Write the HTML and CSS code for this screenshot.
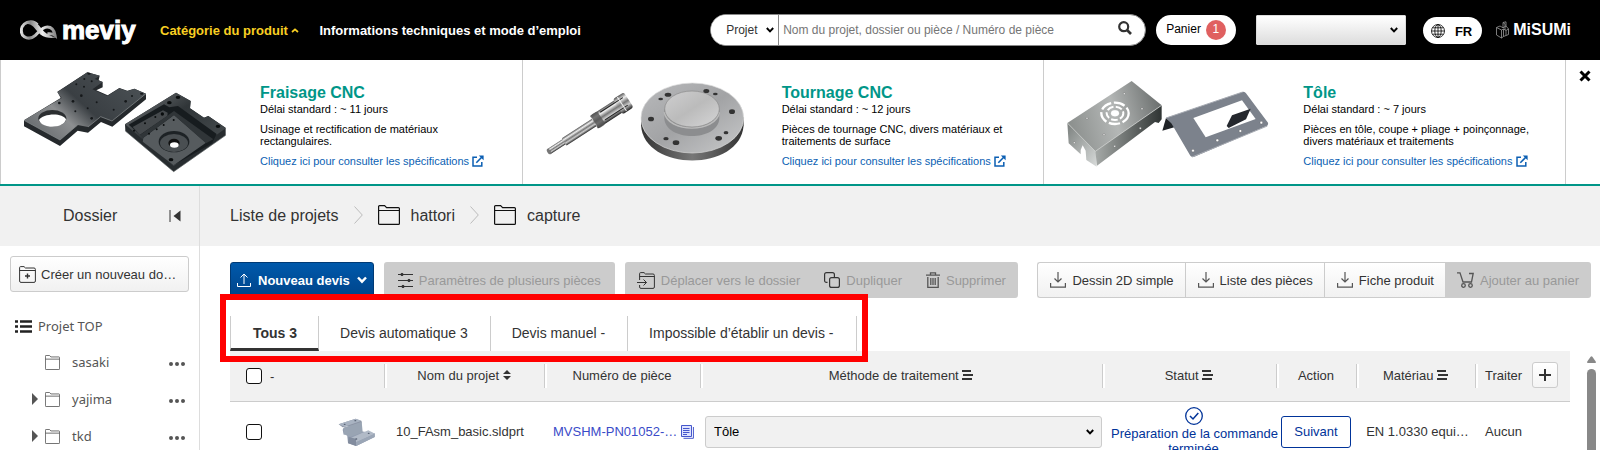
FILE: index.html
```html
<!DOCTYPE html>
<html lang="fr">
<head>
  <meta charset="UTF-8" />
  <meta name="viewport" content="width=device-width, initial-scale=1" />
  <title>meviy - Liste de projets</title>
  <link rel="stylesheet" href="styles.css">
</head>
<body>
  <!-- Icônes partagées -->
  <svg class="sprite" aria-hidden="true">
    <symbol id="i-folder" viewBox="0 0 22 20">
      <path d="M.6 18.4V1.6Q.6.6 1.6.6H6.6L8.6 2.6H20.4Q21.4 2.6 21.4 3.6V18.4Q21.4 19.4 20.4 19.4H1.6Q.6 19.4.6 18.4ZM.6 5.5H21.4" fill="none" stroke="currentColor" stroke-width="1.2"/>
    </symbol>
    <symbol id="i-download" viewBox="0 0 16 16">
      <path d="M8 0V10M4.5 6.5 8 10 11.5 6.5M.6 11V15.2H15.4V11" fill="none" stroke="currentColor" stroke-width="1.2"/>
    </symbol>
    <symbol id="i-external" viewBox="0 0 12 12">
      <path d="M5 2.2H1V11H9.8V7" fill="none" stroke="currentColor" stroke-width="1.5"/>
      <path d="M4.3 7.7 10 2" stroke="currentColor" stroke-width="1.6"/>
      <path d="M6.8.4H11.6V5.2Z" fill="currentColor"/>
    </symbol>
    <symbol id="i-filter" viewBox="0 0 11 10">
      <path d="M0 1H9M1 5H11M0 9H10" stroke="currentColor" stroke-width="2"/>
    </symbol>
    <symbol id="i-next" viewBox="0 0 9 18">
      <path d="M.5.5 8.3 9 .5 17.5" fill="none" stroke="currentColor"/>
    </symbol>
    <symbol id="i-dots" viewBox="0 0 16 4">
      <path d="M2 2H2.01M8 2H8.01M14 2H14.01" stroke="currentColor" stroke-width="4" stroke-linecap="round"/>
    </symbol>
    <symbol id="i-caret" viewBox="0 0 6 12">
      <path d="M0 0 6 6 0 12Z" fill="currentColor"/>
    </symbol>
    <symbol id="i-down" viewBox="0 0 8 6">
      <path d="M.8 1 4 4.4 7.2 1" fill="none" stroke="currentColor" stroke-width="1.9"/>
    </symbol>
  </svg>

  <header class="topbar">
    <a class="logo" href="#">
      <svg width="38" height="20" viewBox="0 0 114 60">
        <defs>
          <linearGradient id="loop" x1="0" x2="1"><stop offset="0" stop-color="#ddd"/><stop offset=".25" stop-color="#888"/><stop offset=".6" stop-color="#eee"/><stop offset="1" stop-color="#8a8a8a"/></linearGradient>
        </defs>
        <path d="M52 14C42 3 24 2 13 12C1 23 1 42 13 50C24 57 37 54 46 46C58 35 66 21 82 21C96 21 103 33 105 46C98 40 91 42 82 41" fill="none" stroke="url(#loop)" stroke-width="9"/>
        <path d="M5 22C12 2 38-4 53 12C66 26 75 46 109 52C96 56 76 54 62 44C50 35 41 14 24 12C15 12 10 15 5 22Z" fill="url(#loop)"/>
      </svg>
      <span>meviy</span>
    </a>
    <nav class="topnav">
      <a class="current" href="#">Catégorie du produit
        <svg width="8" height="5" viewBox="0 0 8 5"><path d="M1 4 4 1.3 7 4" fill="none" stroke="currentColor" stroke-width="1.7"/></svg></a>
      <a href="#">Informations techniques et mode d’emploi</a>
    </nav>

    <form class="search">
      <div class="pick">
        <select aria-label="Type de recherche"><option>Projet</option></select>
        <svg width="8" height="6"><use href="#i-down"/></svg>
      </div>
      <input type="text" aria-label="Recherche" placeholder="Nom du projet, dossier ou pièce / Numéro de pièce" />
      <button type="button" aria-label="Rechercher">
        <svg width="14" height="14" viewBox="0 0 14 14"><circle cx="5.7" cy="5.7" r="4.5" fill="none" stroke="currentColor" stroke-width="2.2"/><path d="M9 9 13 13" stroke="currentColor" stroke-width="2.6"/></svg>
      </button>
    </form>
    <button class="cart">Panier <span class="badge">1</span></button>
    <div class="pick account">
      <select aria-label="Compte"><option></option></select>
      <svg width="8" height="6"><use href="#i-down"/></svg>
    </div>
    <button class="lang">
      <svg width="14" height="14" viewBox="0 0 14 14" fill="none" stroke="currentColor" stroke-width=".8"><circle cx="7" cy="7" r="6.5"/><ellipse cx="7" cy="7" rx="3.2" ry="6.4"/><path d="M7 .6V13.4M.6 7H13.4M1.5 3.8H12.5M1.5 10.2H12.5"/></svg>
      FR
    </button>
    <a class="misumi" href="#">
      <svg width="13" height="18" viewBox="0 0 13 18" fill="none" stroke="#999" stroke-width=".8"><path d="M.5 6.5 5.5 9V17L.5 14ZM.5 6.5 4 5 7 6.8V1.5L10 .8V5M5.5 9 7.5 8V15.5L5.5 17M7.5 8 10 9.5 12.5 8V13.5L7.5 15.5M10 5 12.5 8M7 6.8 10 5M7 1.5 9 3V9M10 9.5V14.5"/></svg>
      <span>MiSUMi</span>
    </a>
  </header>

  <section class="products">
    <article class="product">
      <svg width="238" height="120" viewBox="3 0 714 360">
        <defs>
          <linearGradient id="plate" x1="0" y1=".8" x2="1" y2=".2"><stop offset="0" stop-color="#666a6d"/><stop offset=".3" stop-color="#8d8f91"/><stop offset=".5" stop-color="#3a3f43"/><stop offset="1" stop-color="#4b5155"/></linearGradient>
          <linearGradient id="block" x1="0" y1="0" x2="1" y2="1"><stop offset="0" stop-color="#777b7e"/><stop offset=".4" stop-color="#303538"/><stop offset="1" stop-color="#4d5356"/></linearGradient>
        </defs>
        <path d="M72 181 182 114 172 95 262 37 299 47 296 61 308 66V82L289 91 323 106 358 84 382 92 403 86 438 101V118L337 200 303 186 264 218 233 212 180 258 72 199Z" fill="#25292c"/>
        <path d="M72 181 185 114 172 97 262 37 299 47 284 57 308 66 277 88 322 108 358 85 382 94 403 86 438 101 336 183 302 170 264 201 233 195 180 240Z" fill="url(#plate)"/>
        <path d="M72 181 180 240 233 195M264 201 302 170 336 183 438 101" fill="none" stroke="#8d9192" stroke-width="2"/>
        <ellipse cx="157" cy="175" rx="42" ry="25" fill="#2b2e30"/>
        <path d="M117 180C127 160 188 156 198 178C192 207 125 208 117 180Z" fill="#fff"/>
        <g fill="#15181a"><ellipse cx="267" cy="41" rx="5" ry="3"/><ellipse cx="425" cy="101" rx="5" ry="3"/><circle cx="178" cy="129" r="4"/><circle cx="219" cy="124" r="4"/><circle cx="244" cy="107" r="4"/><circle cx="226" cy="154" r="3"/><circle cx="263" cy="145" r="3"/><circle cx="290" cy="127" r="3"/><circle cx="275" cy="175" r="4"/><circle cx="341" cy="149" r="3"/><circle cx="377" cy="124" r="4"/><circle cx="396" cy="108" r="3"/><circle cx="229" cy="73" r="3"/><circle cx="252" cy="80" r="3"/><circle cx="253" cy="57" r="3"/><circle cx="275" cy="64" r="3"/></g>
        <path d="M375 193 528 98 572 123 570 145 612 173 625 168 677 203V226L521 335 376 213Z" fill="#272c2f"/>
        <path d="M375 193 528 98 572 123 570 145 612 173 625 168 677 205 521 318Z" fill="url(#block)"/>
        <path d="M386 194 492 133 508 142 534 138 650 222 636 250 521 316 428 245 430 232Z" fill="#171c1f"/>
        <path d="M398 201 489 151 503 158 502 168 420 224Z" fill="#45494c"/>
        <path d="M428 245 430 233 522 165 618 248 521 316Z" fill="#565b5e"/>
        <path d="M522 153 640 238 618 250 522 165 430 233 420 225Z" fill="#303538"/>
        <ellipse cx="522" cy="245" rx="46" ry="32" fill="#1d2225"/>
        <ellipse cx="522" cy="249" rx="42" ry="27" fill="#4a4f52"/>
        <ellipse cx="522" cy="249" rx="17" ry="13" fill="#111"/>
        <ellipse cx="523" cy="255" rx="13" ry="8" fill="#fff"/>
        <g fill="#090c0d"><ellipse cx="534" cy="112" rx="7" ry="5"/><ellipse cx="508" cy="128" rx="7" ry="5"/><ellipse cx="654" cy="199" rx="7" ry="5"/><ellipse cx="513" cy="299" rx="7" ry="5"/><circle cx="487" cy="162" r="5"/><circle cx="466" cy="171" r="3"/><circle cx="435" cy="190" r="3"/><circle cx="402" cy="212" r="3"/><circle cx="447" cy="221" r="3"/><circle cx="470" cy="208" r="3"/><circle cx="491" cy="195" r="3"/><circle cx="521" cy="180" r="3"/></g>
        <path d="M376 213 521 335 677 226" fill="none" stroke="#5f6567" stroke-width="2"/>
      </svg>
      <div class="product-text">
        <h2>Fraisage CNC</h2>
        <p>Délai standard : ~ 11 jours</p>
        <p class="desc">Usinage et rectification de matériaux<br>rectangulaires.</p>
        <a href="#">Cliquez ici pour consulter les spécifications <svg width="12" height="12"><use href="#i-external"/></svg></a>
      </div>
    </article>

    <article class="product">
      <svg width="238" height="120" viewBox="-21 0 714 360">
        <defs>
          <linearGradient id="shaft" x1="0" y1="0" x2="0" y2="1"><stop offset="0" stop-color="#555"/><stop offset=".25" stop-color="#eee"/><stop offset=".5" stop-color="#777"/><stop offset=".7" stop-color="#ccc"/><stop offset="1" stop-color="#222"/></linearGradient>
          <linearGradient id="disc" x1="0" y1="0" x2="1" y2="1"><stop offset="0" stop-color="#b9babc"/><stop offset=".5" stop-color="#a2a3a5"/><stop offset="1" stop-color="#c9cacb"/></linearGradient>
          <linearGradient id="rim"><stop offset="0" stop-color="#333"/><stop offset=".5" stop-color="#777"/><stop offset="1" stop-color="#333"/></linearGradient>
          <linearGradient id="boss" x1="0" y1="0" x2="1" y2="1"><stop offset="0" stop-color="#cfcfd0"/><stop offset=".5" stop-color="#bbb"/><stop offset="1" stop-color="#d6d6d7"/></linearGradient>
        </defs>
        <g transform="translate(56 275) rotate(-33)">
          <rect x="0" y="-9" width="62" height="18" fill="url(#shaft)"/>
          <rect x="55" y="-12" width="112" height="26" fill="url(#shaft)"/>
          <rect x="162" y="-22" width="100" height="44" fill="url(#shaft)"/>
          <rect x="164" y="-23" width="24" height="47" rx="6" fill="#555" opacity=".8"/>
          <rect x="247" y="-27" width="39" height="54" rx="8" fill="url(#shaft)"/>
          <path d="M194-15H275M194 12H275" stroke="#222" stroke-width="3"/>
          <ellipse cx="1" cy="0" rx="5" ry="9" fill="#777"/>
          <path d="M262-25V25" stroke="#eee" stroke-width="3"/>
        </g>
        <path d="M333 172V196C342 337 631 337 641 196V172Z" fill="url(#rim)"/>
        <ellipse cx="487" cy="174" rx="154" ry="105" fill="url(#disc)" stroke="#ddd" stroke-width="2"/>
        <path d="M403 148V176C408 245 563 245 568 176V148Z" fill="#8c8d8f"/>
        <path d="M403 156C413 220 558 220 568 156" fill="none" stroke="#bbb" stroke-width="5"/>
        <ellipse cx="486" cy="147" rx="82" ry="54" fill="url(#boss)" stroke="#888" stroke-width="2"/>
        <g fill="#333"><ellipse cx="414" cy="104" rx="10" ry="6"/><ellipse cx="392" cy="117" rx="7" ry="4"/><ellipse cx="529" cy="93" rx="9" ry="6"/><ellipse cx="556" cy="102" rx="7" ry="4"/><ellipse cx="606" cy="155" rx="9" ry="7"/><ellipse cx="363" cy="177" rx="9" ry="7"/><ellipse cx="408" cy="236" rx="8" ry="5"/><ellipse cx="438" cy="248" rx="10" ry="7"/><ellipse cx="566" cy="235" rx="10" ry="7"/><ellipse cx="588" cy="218" rx="7" ry="5"/></g>
      </svg>
      <div class="product-text">
        <h2>Tournage CNC</h2>
        <p>Délai standard : ~ 12 jours</p>
        <p class="desc">Pièces de tournage CNC, divers matériaux et<br>traitements de surface</p>
        <a href="#">Cliquez ici pour consulter les spécifications <svg width="12" height="12"><use href="#i-external"/></svg></a>
      </div>
    </article>

    <article class="product">
      <svg width="238" height="120" viewBox="-18 0 714 360">
        <defs>
          <linearGradient id="case" x1="0" y1=".6" x2="1" y2=".4"><stop offset="0" stop-color="#8a8e8c"/><stop offset=".5" stop-color="#b4b7b6"/><stop offset="1" stop-color="#6c706f"/></linearGradient>
          <linearGradient id="case-side"><stop offset="0" stop-color="#a6aaa8"/><stop offset="1" stop-color="#2f3433"/></linearGradient>
          <linearGradient id="case-front" x1="0" y1="0" x2="1" y2="1"><stop offset="0" stop-color="#7b807e"/><stop offset="1" stop-color="#d8dbda"/></linearGradient>
        </defs>
        <path d="M52 189 140 270V320L109 300 107 272 98 256 92 270V283L56 250Z" fill="url(#case-front)"/>
        <path d="M136 272 335 136V178L326 189 315 186 141 317Z" fill="url(#case-side)"/>
        <path d="M52 189 245 63 335 136 136 274Z" fill="url(#case)"/>
        <path d="M52 189 136 274 335 136" fill="none" stroke="#d6d8d7" stroke-width="2"/>
        <g fill="none" stroke="#fff"><ellipse cx="195" cy="160" rx="41" ry="32" stroke-width="7" stroke-dasharray="34 8"/><ellipse cx="195" cy="160" rx="25" ry="20" stroke-width="6" stroke-dasharray="20 7"/><ellipse cx="195" cy="160" rx="12" ry="9" fill="#fff"/></g>
        <g fill="#eee" stroke="#555"><circle cx="223" cy="101" r="3"/><circle cx="276" cy="146" r="3"/><circle cx="111" cy="175" r="3"/><circle cx="162" cy="224" r="3"/><circle cx="73" cy="248" r="3"/><circle cx="194" cy="259" r="3"/><circle cx="271" cy="205" r="3"/></g>
        <path d="M337 212 348 174 378 200Z" fill="#1f2327"/>
        <path d="M348 174 578 96Q584 94 588 100L654 188Q656 195 648 199L433 290Q426 292 421 287L364 190Z" fill="#7c828c"/>
        <path d="M348 174 578 96M426 291 652 198" fill="none" stroke="#a7abb3" stroke-width="3"/>
        <path d="M430 174 576 121 617 177 467 232Z" fill="#fff"/>
        <path d="M530 198 546 166 602 146 588 178 536 204Z" fill="#24272d"/>
        <g fill="#fff" stroke="#555"><circle cx="429" cy="272" r="4"/><circle cx="502" cy="241" r="4"/><circle cx="571" cy="213" r="4"/><circle cx="634" cy="188" r="4"/></g>
      </svg>
      <div class="product-text">
        <h2>Tôle</h2>
        <p>Délai standard : ~ 7 jours</p>
        <p class="desc">Pièces en tôle, coupe + pliage + poinçonnage,<br>divers matériaux et traitements</p>
        <a href="#">Cliquez ici pour consulter les spécifications <svg width="12" height="12"><use href="#i-external"/></svg></a>
      </div>
    </article>

    <div class="products-close">
      <button aria-label="Fermer"><svg width="12" height="12" viewBox="0 0 12 12"><path d="M1.5 1.5 10.5 10.5M10.5 1.5 1.5 10.5" stroke="currentColor" stroke-width="3"/></svg></button>
    </div>
  </section>

  <div class="workspace">
    <aside class="sidebar">
      <div class="sidebar-head">
        <span>Dossier</span>
        <button aria-label="Réduire"><svg width="12" height="12" viewBox="0 0 12 12"><path d="M1 0V12" stroke="currentColor"/><path d="M11.5.5V11.5L4.5 6Z" fill="currentColor"/></svg></button>
      </div>
      <button class="new-folder">
        <svg width="17" height="17" viewBox="0 0 17 17" fill="none" stroke="currentColor"><path d="M.6 15V1.6Q.6.6 1.6.6H5L6.5 2H15Q16.4 2 16.4 3.4V15Q16.4 16.4 15 16.4H2Q.6 16.4.6 15ZM.6 4.5H16.4"/><path d="M8.5 7.5V12.5M6 10H11" stroke-width="1.4"/></svg>
        <span>Créer un nouveau do…</span>
      </button>
      <a class="tree-root" href="#">
        <svg width="17" height="13" viewBox="0 0 17 13"><path d="M0 1.5H3M0 6.5H3M0 11.5H3M5 1.5H17M5 6.5H17M5 11.5H17" stroke="#222" stroke-width="2.4"/></svg>
        Projet TOP
      </a>
      <ul class="tree">
        <li>
          <span class="caret"></span>
          <svg width="15" height="15" viewBox="0 0 22 20" preserveAspectRatio="none"><use href="#i-folder" width="22" height="20"/></svg>
          <a href="#">sasaki</a>
          <button aria-label="Options"><svg width="16" height="4"><use href="#i-dots"/></svg></button>
        </li>
        <li>
          <span class="caret"><svg width="6" height="12"><use href="#i-caret"/></svg></span>
          <svg width="15" height="15" viewBox="0 0 22 20" preserveAspectRatio="none"><use href="#i-folder" width="22" height="20"/></svg>
          <a href="#">yajima</a>
          <button aria-label="Options"><svg width="16" height="4"><use href="#i-dots"/></svg></button>
        </li>
        <li>
          <span class="caret"><svg width="6" height="12"><use href="#i-caret"/></svg></span>
          <svg width="15" height="15" viewBox="0 0 22 20" preserveAspectRatio="none"><use href="#i-folder" width="22" height="20"/></svg>
          <a href="#">tkd</a>
          <button aria-label="Options"><svg width="16" height="4"><use href="#i-dots"/></svg></button>
        </li>
      </ul>
    </aside>

    <main class="main">
      <nav class="breadcrumb">
        <a href="#">Liste de projets</a>
        <svg class="sep" width="9" height="18"><use href="#i-next"/></svg>
        <a href="#"><svg width="22" height="20"><use href="#i-folder"/></svg>hattori</a>
        <svg class="sep" width="9" height="18"><use href="#i-next"/></svg>
        <a href="#"><svg width="22" height="20"><use href="#i-folder"/></svg>capture</a>
      </nav>

      <div class="toolbar">
        <button class="btn primary">
          <svg width="14" height="14" viewBox="0 0 14 14" fill="none" stroke="currentColor"><path d="M7 11V1M3.5 4.5 7 1 10.5 4.5M.5 10V13.5H13.5V10"/></svg>
          Nouveau devis
          <svg class="drop" width="10" height="8" viewBox="0 0 10 8"><path d="M1 1.5 5 5.7 9 1.5" fill="none" stroke="currentColor" stroke-width="2.4"/></svg>
        </button>
        <button class="btn" disabled>
          <svg width="15" height="16" viewBox="0 0 15 16" stroke="currentColor" fill="currentColor"><path d="M0 2.5H15M0 8.5H15M0 14.5H15"/><circle cx="4" cy="2.5" r="1.2"/><circle cx="11" cy="8.5" r="1.2"/><circle cx="5" cy="14.5" r="1.2"/></svg>
          Paramètres de plusieurs pièces
        </button>
        <div class="group">
          <button class="btn" disabled>
            <svg width="18" height="17" viewBox="0 0 18 17" fill="none" stroke="currentColor"><path d="M2.6 8V1.6Q2.6.6 3.6.6H7L8.5 2H16Q17.4 2 17.4 3.4V15Q17.4 16.4 16 16.4H4Q2.6 16.4 2.6 15V13M2.6 4.5H17.4M0 10.5H9.5M6.5 7.5 9.5 10.5 6.5 13.5"/></svg>
            Déplacer vers le dossier
          </button>
          <button class="btn" disabled>
            <svg width="16" height="16" viewBox="0 0 16 16" fill="none" stroke="currentColor" stroke-width="1.2"><rect x="5.6" y="5.6" width="9.8" height="9.8" rx="2"/><path d="M3.5 10.4H2.6Q.6 10.4.6 8.4V2.6Q.6.6 2.6.6H8.4Q10.4.6 10.4 2.6V5.6"/></svg>
            Dupliquer
          </button>
          <button class="btn" disabled>
            <svg width="14" height="16" viewBox="0 0 14 16" fill="none" stroke="#555" stroke-width="1.3"><path d="M0 3.2H14M4.5 3V.8H9.5V3M1.8 5V15.3H12.2V5"/><path d="M4.8 6V13M7 6V13M9.2 6V13"/></svg>
            Supprimer
          </button>
        </div>
        <div class="group exports">
          <button class="btn light"><svg width="16" height="16"><use href="#i-download"/></svg>Dessin 2D simple</button>
          <button class="btn light"><svg width="16" height="16"><use href="#i-download"/></svg>Liste des pièces</button>
          <button class="btn light"><svg width="16" height="16"><use href="#i-download"/></svg>Fiche produit</button>
          <button class="btn" disabled>
            <svg width="17" height="16" viewBox="0 0 17 16" fill="none" stroke="#555" stroke-width="1.3"><path d="M0 .8H3L6 10H14.5L16.2 1.5H12"/><circle cx="6.5" cy="13.5" r="1.8"/><circle cx="13.5" cy="13.5" r="1.8"/></svg>
            Ajouter au panier
          </button>
        </div>
      </div>

      <div class="tabs">
        <button class="tab active">Tous 3</button>
        <button class="tab">Devis automatique 3</button>
        <button class="tab">Devis manuel -</button>
        <button class="tab">Impossible d’établir un devis -</button>
        <div class="highlight"></div>
      </div>

      <div class="table-area">
        <table class="parts">
          <colgroup>
            <col class="c-check"><col class="c-name"><col class="c-number"><col><col class="c-status"><col class="c-action"><col class="c-material"><col class="c-finish">
          </colgroup>
          <thead>
            <tr>
              <th class="select-cell"><div><input type="checkbox" id="checkAll" /><label for="checkAll">-</label></div></th>
              <th>Nom du projet <svg width="8" height="10" viewBox="0 0 8 10"><path d="M0 4 4 0 8 4ZM0 6 4 10 8 6Z" fill="currentColor"/></svg></th>
              <th>Numéro de pièce</th>
              <th>Méthode de traitement <svg width="11" height="10"><use href="#i-filter"/></svg></th>
              <th>Statut <svg width="11" height="10"><use href="#i-filter"/></svg></th>
              <th>Action</th>
              <th>Matériau <svg width="11" height="10"><use href="#i-filter"/></svg></th>
              <th class="finish-cell"><div><span>Traiter</span><button class="add-col" aria-label="Ajouter une colonne"><svg width="12" height="12" viewBox="0 0 12 12"><path d="M6 0V12M0 6H12" stroke="currentColor" stroke-width="2"/></svg></button></div></th>
            </tr>
          </thead>
          <tbody>
            <tr>
              <td class="select-cell"><div>
                <input type="checkbox" aria-label="Sélectionner 10_FAsm_basic.sldprt" />
                <svg class="thumb" width="38" height="30" viewBox="0 0 114 90">
                  <path d="M2 22 53 5 71 13 68 38 36 54 32 27 14 31Z" fill="#8b93a3"/>
                  <path d="M2 22 53 5 71 11 19 29Z" fill="#a9b3c2"/>
                  <path d="M14 38 17 53 27 50 30 78 55 87 110 60V49L68 43 60 20 17 32Z" fill="#929caf"/>
                  <path d="M17 32 71 14 74 46 36 60 18 52Z" fill="#99a4b3"/>
                  <path d="M36 64 91 40 111 50 55 76 33 74Z" fill="#b1bac7"/>
                  <path d="M32 60 54 65V87L30 79Z" fill="#828c9e"/>
                  <path d="M54 76 110 50V60L54 87Z" fill="#9ba6b6"/>
                  <g fill="#555f70"><ellipse cx="20" cy="22" rx="3" ry="2"/><ellipse cx="52" cy="11" rx="3" ry="2"/><ellipse cx="55" cy="66" rx="3" ry="2"/><ellipse cx="92" cy="49" rx="3" ry="2"/></g>
                </svg>
              </div></td>
              <td class="name-cell">10_FAsm_basic.sldprt</td>
              <td class="number-cell"><a href="#">MVSHM-PN01052-…</a>
                <svg width="13" height="14" viewBox="0 0 13 14" fill="none" stroke="#4557cc"><path d="M.5.5H10.5V11.5H.5Z" fill="#dfe3ff"/><path d="M2 3.5H8.5M2 5.5H8.5M2 7.5H8.5M2 9.5H6"/><path d="M2.5 13.3H12.4V2"/></svg></td>
              <td class="method-cell"><div class="pick">
                <select aria-label="Méthode de traitement"><option>Tôle</option></select>
                <svg width="8" height="6"><use href="#i-down"/></svg>
              </div></td>
              <td class="status-cell">
                <svg width="18" height="18" viewBox="0 0 18 18" fill="none" stroke="currentColor"><circle cx="9" cy="9" r="8.3" stroke-width="1.3"/><path d="M5 9 8 12 13.3 6" stroke-width="1.5"/></svg>
                <span>Préparation de la commande<br>terminée</span>
              </td>
              <td class="action-cell"><button>Suivant</button></td>
              <td class="material-cell">EN 1.0330 equi…</td>
              <td class="finish-cell">Aucun</td>
            </tr>
          </tbody>
        </table>
        <div class="scrollbar">
          <svg width="9" height="7" viewBox="0 0 9 7"><path d="M1 7Q-.5 7 .3 5.5L3.6.8Q4.5-.4 5.4.8L8.7 5.5Q9.5 7 8 7Z" fill="#888"/></svg>
          <div class="thumb-bar"></div>
        </div>
      </div>
    </main>
  </div>
</body>
</html>
```
FILE: styles.css
```css
* {
  box-sizing: border-box;
}
body {
  font-family: "Liberation Sans", Arial, sans-serif;
  font-size: 13px;
  line-height: 15px;
  color: #333;
  background: #fff;
  margin: 0;
  height: 100vh;
  display: flex;
  flex-direction: column;
  overflow: hidden;
}
a {
  color: inherit;
  text-decoration: none;
}
button, select, input {
  font: inherit;
  color: inherit;
}
button {
  border: none;
  background: none;
  padding: 0;
  cursor: pointer;
}
svg {
  flex: none;
}
.sprite {
  position: absolute;
  width: 0;
  height: 0;
}

/* Listes déroulantes avec leur flèche */
.pick {
  position: relative;
}
.pick select {
  appearance: none;
  display: block;
  width: 100%;
  height: 100%;
  border-radius: 0;
}
.pick svg {
  position: absolute;
  right: 8px;
  top: 50%;
  margin-top: -3px;
  color: #000;
  pointer-events: none;
}

/* Barre du haut */
.topbar {
  background: #000;
  color: #fff;
  height: 60px;
  flex: none;
  display: flex;
  align-items: center;
  padding: 0 29px 0 20px;
}
.logo {
  display: flex;
  align-items: center;
  gap: 4px;
  width: 140px;
}
.logo span {
  font-size: 26px;
  line-height: 30px;
  font-weight: bold;
  -webkit-text-stroke: 1px #fff;
}
.topnav {
  display: flex;
  gap: 20px;
  font-weight: bold;
  white-space: nowrap;
}
.topnav .current {
  color: #f9cf22;
}
.topnav svg {
  vertical-align: 2px;
}
.search {
  display: flex;
  flex: 0 1 436px;
  height: 32px;
  margin-left: auto;
  background: #fff;
  border: 1px solid #888;
  border-radius: 16px;
  overflow: hidden;
  font-size: 12px;
}
.search .pick {
  width: 68px;
}
.search .pick svg {
  right: 5px;
}
.search select {
  border: none;
  border-right: 1px solid #888;
  padding: 0 0 0 15px;
  background: #fff;
  color: #333;
}
.search input {
  flex: 1;
  min-width: 0;
  border: none;
  padding: 0 4px;
  background: #fff;
}
.search input::placeholder {
  color: #757575;
}
.search button {
  width: 40px;
  color: #333;
  padding-bottom: 4px;
}
.search button svg {
  vertical-align: middle;
}
.cart {
  display: flex;
  align-items: center;
  gap: 5px;
  height: 30px;
  margin-left: 10px;
  padding: 0 10px 2px;
  border-radius: 15px;
  background: #fff;
  color: #000;
  font-size: 12px;
}
.badge {
  width: 20px;
  height: 20px;
  margin-top: 2px;
  border-radius: 10px;
  background: #e06060;
  color: #fff;
  line-height: 19px;
}
.account {
  width: 150px;
  height: 30px;
  margin-left: 20px;
}
.account select {
  border: 1px solid #ddd;
  border-radius: 1px;
  background: linear-gradient(#fff, #ddd);
}
.lang {
  display: flex;
  align-items: center;
  gap: 10px;
  height: 27px;
  margin-left: 17px;
  padding: 2px 10px 0 8px;
  border-radius: 14px;
  background: #fff;
  color: #000;
  font-weight: bold;
}
.misumi {
  display: flex;
  align-items: center;
  gap: 4px;
  margin-left: 14px;
}
.misumi span {
  font-weight: bold;
  font-size: 16px;
  line-height: 20px;
}

/* Catégories */
.products {
  display: flex;
  flex: none;
  border-bottom: 2px solid #009688;
}
.product {
  flex: 1;
  display: flex;
  height: 124px;
  border-left: 1px solid #ccc;
  color: #000;
  font-size: 11px;
  line-height: 12px;
  white-space: nowrap;
}
.product-text {
  padding: 23px 0 0 21px;
}
.product-text h2 {
  margin: 0;
  font-size: 16px;
  line-height: 20px;
  color: #009688;
}
.product-text p {
  margin: 0 0 8px;
}
.product-text a {
  color: #0b5fb3;
}
.product-text a svg {
  vertical-align: -2px;
}
.products-close {
  width: 35px;
  border-left: 1px solid #ccc;
  padding: 10px 0 0 13px;
}
.products-close button {
  color: #000;
}

.workspace {
  flex: 1;
  min-height: 0;
  display: flex;
}

/* Dossiers */
.sidebar {
  width: 200px;
  flex: none;
  border-right: 1px solid #ddd;
}
.sidebar-head {
  display: flex;
  align-items: center;
  justify-content: space-between;
  height: 60px;
  padding: 0 18px 2px 63px;
  background: #f1f1f1;
  font-size: 16px;
}
.sidebar-head button {
  padding-top: 3px;
}
.new-folder {
  display: flex;
  align-items: center;
  gap: 5px;
  width: 179px;
  height: 36px;
  margin: 10px 10px 0;
  padding: 0 4px 0 8px;
  border: 1px solid #ccc;
  border-radius: 3px;
  background: linear-gradient(#fff, #f1f1f1);
  white-space: nowrap;
}
.tree-root {
  display: flex;
  align-items: center;
  gap: 6px;
  margin: 24px 0 0 15px;
  font-family: "Noto Sans", sans-serif;
  line-height: 20px;
  color: #555;
}
.tree {
  list-style: none;
  margin: 8px 0 0;
  padding: 0 14px 0 32px;
  font-family: "Noto Sans", sans-serif;
  color: #555;
}
.tree li {
  display: flex;
  align-items: center;
  height: 37px;
}
.tree .caret {
  width: 13px;
  line-height: 12px;
}
.tree a {
  flex: 1;
  margin-left: 12px;
}
.tree button {
  line-height: 4px;
}

/* Zone principale */
.main {
  flex: 1;
  min-width: 0;
}
.breadcrumb {
  display: flex;
  align-items: center;
  height: 60px;
  padding: 0 0 2px 30px;
  background: #f1f1f1;
  font-size: 16px;
  gap: 15px;
}
.breadcrumb a {
  display: flex;
  align-items: center;
  gap: 11px;
}
.breadcrumb a svg {
  color: #111;
}
.breadcrumb .sep {
  color: #bbb;
}
.toolbar {
  display: flex;
  gap: 10px;
  padding: 16px 9px 0 30px;
  white-space: nowrap;
}
.btn {
  display: flex;
  align-items: center;
  gap: 6px;
  height: 36px;
  padding: 0 12px;
  border-radius: 3px;
}
.btn:disabled {
  background: #ccc;
  color: #999;
  cursor: default;
}
.btn:disabled svg {
  color: #333;
}
.btn.primary {
  gap: 7px;
  padding: 0 6px;
  border: 1px solid #003a75;
  background: linear-gradient(#0059ab, #00448a);
  color: #fff;
  font-weight: bold;
}
.toolbar > .btn:disabled {
  padding: 0 14px;
}
.group {
  display: flex;
}
.group .btn {
  border-radius: 0;
}
.group .btn:first-child {
  border-radius: 3px 0 0 3px;
}
.group .btn:last-child {
  border-radius: 0 3px 3px 0;
}
.exports {
  margin-left: auto;
}
.btn.light {
  padding: 0 11px 0 12px;
  border: 1px solid #ccc;
  border-right: none;
  background: linear-gradient(#fff, #f1f1f1);
}
.btn.light svg {
  color: #555;
}
.tabs {
  position: relative;
  display: flex;
  height: 35px;
  margin: 18px 30px 0;
}
.tab {
  padding: 0 22px 0 21px;
  border-right: 1px solid #ccc;
  font-size: 14px;
}
.tab.active {
  padding: 3px 21px 0 22px;
  border-left: 1px solid #ccc;
  border-bottom: 3px solid #333;
  font-weight: bold;
}
/* Cadre rouge autour des onglets */
.highlight {
  position: absolute;
  left: -10px;
  top: -22px;
  width: 648px;
  height: 68px;
  border: 6px solid #f00;
  pointer-events: none;
}

/* Liste des pièces */
.table-area {
  display: flex;
  justify-content: space-between;
  padding-left: 30px;
}
.parts {
  flex: 1;
  width: 100%;
  table-layout: fixed;
  border-collapse: separate;
  border-spacing: 0;
  margin-right: 15px;
}
.c-check { width: 154px; }
.c-name { width: 160px; }
.c-number { width: 156px; }
.c-status { width: 174px; }
.c-action { width: 80px; }
.c-material { width: 119px; }
.c-finish { width: 95px; }
.parts th, .parts td {
  padding: 0;
  text-align: center;
  font-weight: normal;
  white-space: nowrap;
}
.parts th {
  height: 51px;
  padding: 0 4px 2px;
  border-bottom: 1px solid #ccc;
  background: linear-gradient(to right, #ccc 1px, #fff 1px) left 13px / 3px 24px no-repeat #f1f1f1;
}
.parts th.select-cell {
  padding: 0;
  background: #f1f1f1;
}
.parts td {
  height: 59px;
}
.parts input {
  appearance: none;
  width: 16px;
  height: 16px;
  margin: 0;
  border: 1px solid #111;
  border-radius: 3px;
  background: #fff;
}
.parts .select-cell div {
  display: flex;
  align-items: center;
  gap: 8px;
  padding: 0 8px 0 16px;
}
.select-cell .thumb {
  margin-left: auto;
}
.parts .name-cell {
  text-align: left;
  padding-left: 12px;
}
.parts .number-cell {
  text-align: left;
  padding-left: 9px;
}
.number-cell a {
  color: #3a4bc8;
}
.number-cell svg {
  vertical-align: -3px;
}
.parts .method-cell {
  padding-left: 5px;
}
.method-cell .pick {
  height: 32px;
}
.method-cell select {
  padding: 0 8px;
  border: 1px solid #ccc;
  border-radius: 3px;
  background: #f1f1f1;
  color: #000;
}
.parts .status-cell {
  padding-left: 9px;
  color: #003399;
}
.status-cell svg, .status-cell span {
  display: block;
  margin: 0 auto;
}
.status-cell svg {
  margin-bottom: 1px;
}
.action-cell button {
  width: 70px;
  height: 32px;
  border: 1px solid #003399;
  border-radius: 3px;
  color: #003399;
}
.parts .material-cell {
  padding-left: 4px;
}
.parts .finish-cell {
  text-align: left;
  padding-left: 10px;
}
.finish-cell div {
  display: flex;
  align-items: center;
  justify-content: space-between;
  padding-right: 8px;
}
.add-col {
  width: 26px;
  height: 26px;
  border: 1px solid #ccc;
  border-radius: 3px;
  background: linear-gradient(#fff, #f4f4f4);
}
.add-col svg {
  vertical-align: -1px;
}
.scrollbar {
  width: 15px;
  display: flex;
  flex-direction: column;
  align-items: center;
  gap: 6px;
  padding: 5px 2px 0 0;
}
.thumb-bar {
  width: 9px;
  flex: 1;
  border-radius: 5px 5px 0 0;
  background: #888;
}
```
